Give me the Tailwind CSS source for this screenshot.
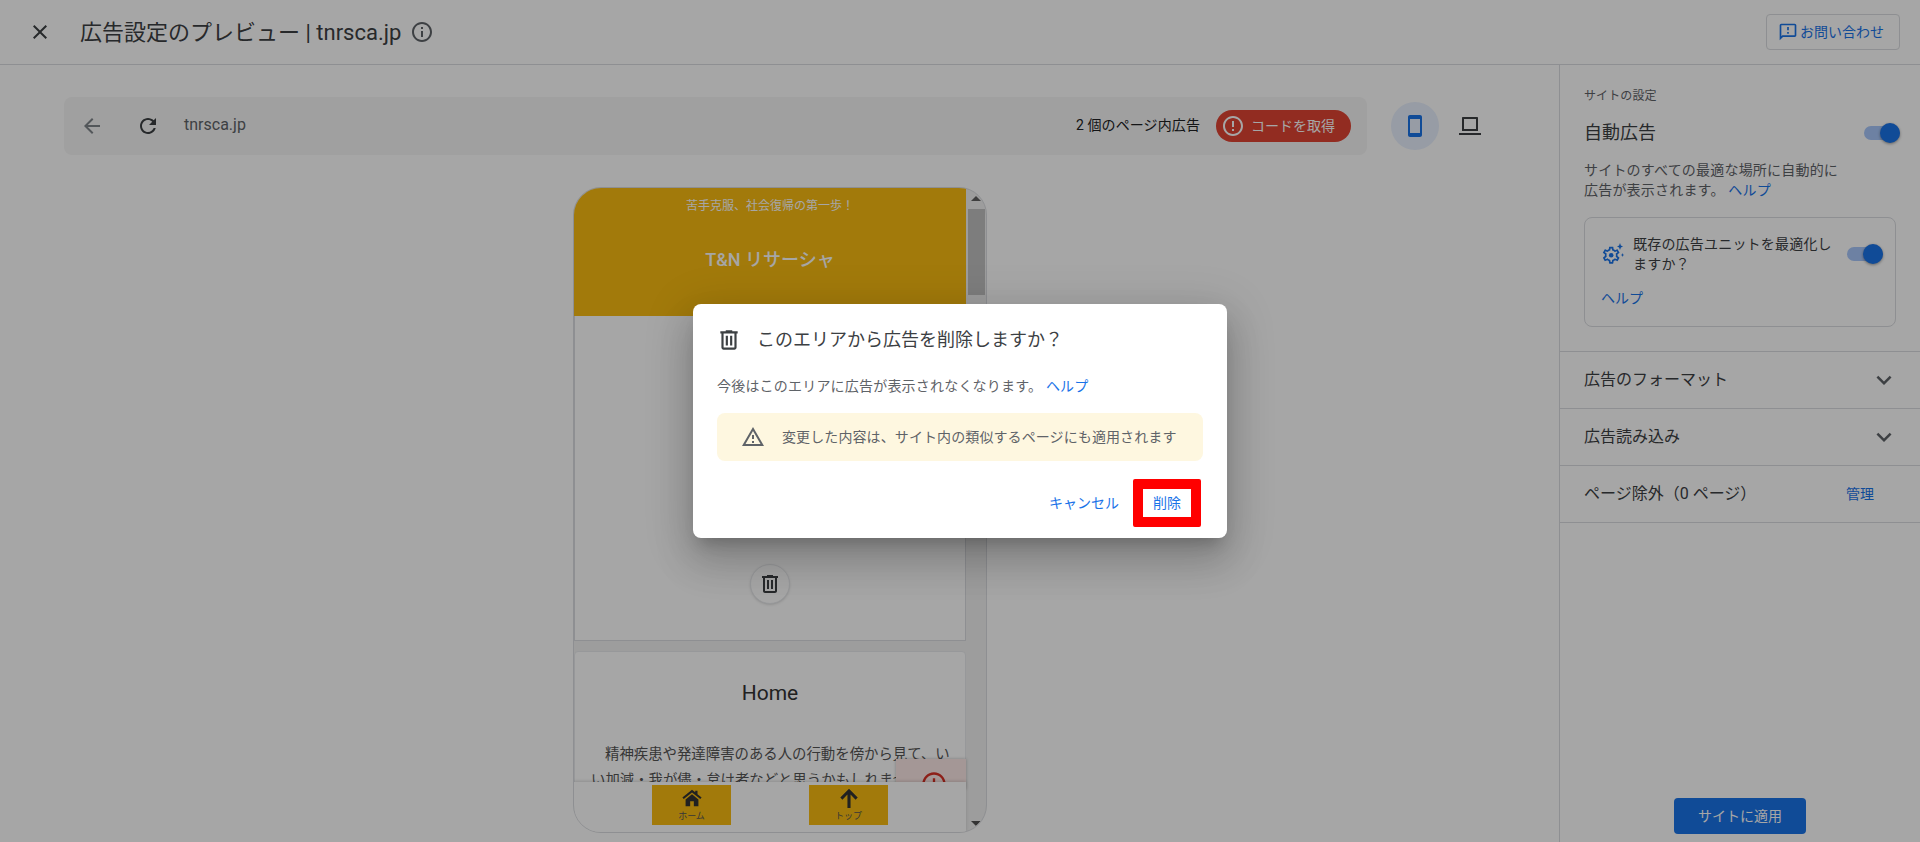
<!DOCTYPE html>
<html lang="ja">
<head>
    <meta charset="UTF-8">
    <title>広告設定のプレビュー</title>
    <script src="https://cdn.jsdelivr.net/npm/@tailwindcss/browser@4"></script>
</head>
<body class="relative h-[842px] overflow-hidden bg-white text-[#3c4043] [font-family:Roboto,'Noto_Sans_CJK_JP',sans-serif]">

    <!-- Top bar -->
    <header class="flex h-[65px] items-center border-b border-[#dadce0] pl-7 pr-5">
        <svg class="h-6 w-6 fill-[#3c4043]" viewBox="0 0 24 24"><path d="M19 6.41L17.59 5 12 10.59 6.41 5 5 6.41 10.59 12 5 17.59 6.41 19 12 13.41 17.59 19 19 17.59 13.41 12z"/></svg>
        <h1 class="ml-7 text-[22px] text-[#3c4043]">広告設定のプレビュー | tnrsca.jp</h1>
        <svg class="ml-[9px] h-6 w-6 fill-[#5f6368]" viewBox="0 0 24 24"><path d="M11 7h2v2h-2zm0 4h2v6h-2zm1-9C6.48 2 2 6.48 2 12s4.48 10 10 10 10-4.48 10-10S17.52 2 12 2zm0 18c-4.41 0-8-3.59-8-8s3.59-8 8-8 8 3.59 8 8-3.59 8-8 8z"/></svg>
        <button class="ml-auto flex h-9 w-[134px] items-center justify-center gap-[2px] rounded border border-[#dadce0] pr-1 text-sm text-[#1a73e8]">
            <svg class="h-5 w-5 fill-[#1a73e8]" viewBox="0 0 24 24"><path d="M20 2H4c-1.1 0-1.99.9-1.99 2L2 22l4-4h14c1.1 0 2-.9 2-2V4c0-1.1-.9-2-2-2zm0 14H5.17L4 17.17V4h16v12zM11 12h2v2h-2zm0-6h2v4h-2z"/></svg>
            お問い合わせ
        </button>
    </header>

    <div class="flex h-[777px]">
        <!-- Preview column -->
        <main class="w-[1559px]">
            <div class="flex items-center pl-16 pt-8">
                <div class="flex h-[58px] w-[1303px] items-center rounded-lg bg-[#f6f6f6] pl-4 pr-4">
                    <svg class="h-6 w-6 fill-[#80868b]" viewBox="0 0 24 24"><path d="M20 11H7.83l5.59-5.59L12 4l-8 8 8 8 1.41-1.41L7.83 13H20v-2z"/></svg>
                    <svg class="ml-8 h-6 w-6 fill-[#3c4043]" viewBox="0 0 24 24"><path d="M17.65 6.35C16.2 4.9 14.21 4 12 4c-4.42 0-7.99 3.58-7.99 8s3.57 8 7.99 8c3.73 0 6.84-2.55 7.73-6h-2.08c-.82 2.33-3.04 4-5.65 4-3.31 0-6-2.69-6-6s2.69-6 6-6c1.66 0 3.14.69 4.22 1.78L13 11h7V4l-2.35 2.35z"/></svg>
                    <span class="mb-[2px] ml-[24px] text-base text-[#5f6368]">tnrsca.jp</span>
                    <span class="mb-[2px] ml-auto text-[14px] tracking-[0.1px] text-[#202124]">2 個のページ内広告</span>
                    <button class="ml-4 flex h-8 w-[135px] items-center gap-[6px] rounded-full bg-[#e14434] pl-[5px] text-sm text-white">
                        <svg class="h-6 w-6 fill-white" viewBox="0 0 24 24"><path d="M11 15h2v2h-2zm0-8h2v6h-2zm.99-5C6.47 2 2 6.48 2 12s4.47 10 9.99 10C17.52 22 22 17.52 22 12S17.52 2 11.99 2zM12 20c-4.42 0-8-3.58-8-8s3.58-8 8-8 8 3.58 8 8-3.58 8-8 8z"/></svg>
                        コードを取得
                    </button>
                </div>
                <div class="ml-6 flex h-12 w-12 items-center justify-center rounded-full bg-[#e8f0fe]">
                    <svg class="h-6 w-6 fill-[#1a73e8]" viewBox="0 0 24 24"><path d="M17 1.01L7 1c-1.1 0-2 .9-2 2v18c0 1.1.9 2 2 2h10c1.1 0 2-.9 2-2V3c0-1.1-.9-1.99-2-1.99zM17 19H7V5h10v14z"/></svg>
                </div>
                <svg class="ml-[19px] h-6 w-6 fill-[#3c4043]" viewBox="0 0 24 24"><path fill-rule="evenodd" d="M5 3h14c.6 0 1 .4 1 1v13H4V4c0-.6.4-1 1-1zm1 2v10h12V5zM1 19h22v2H1z"/></svg>
            </div>

            <!-- Phone preview -->
            <div class="relative ml-[573px] mt-8 flex h-[646px] w-[414px] overflow-hidden rounded-[28px] border border-[#dadce0] bg-[#f1f1f1]">
                <div class="w-[392px] shrink-0">
                    <div class="flex h-[128px] flex-col items-center bg-[#f9bc12] text-white">
                        <p class="mt-[11px] text-xs leading-[14px]">苦手克服、社会復帰の第一歩！</p>
                        <p class="mt-[35px] text-lg font-medium leading-6">T&amp;N リサーシャ</p>
                    </div>
                    <div class="flex h-[325px] flex-col items-center border border-t-0 border-[#dadce0] bg-white pt-[248px]">
                        <div class="flex h-10 w-10 items-center justify-center rounded-full border border-[#e8eaed] bg-white shadow-sm">
                            <svg class="h-6 w-6 fill-[#3c4043]" viewBox="0 0 24 24"><path d="M15 4V3H9v1H4v2h1v13c0 1.1.9 2 2 2h10c1.1 0 2-.9 2-2V6h1V4h-5zm2 15H7V6h10v13zM9 8h2v9H9zm4 0h2v9h-2z"/></svg>
                        </div>
                    </div>
                    <div class="mt-[10px] h-[200px] overflow-hidden rounded-t border border-[#e8eaed] bg-white pl-4 pr-2">
                        <h2 class="mt-[25px] pr-2 text-center text-[21px] leading-8 text-[#333]">Home</h2>
                        <p class="mt-[33px] indent-[14px] text-[14.4px] leading-[26px] text-[#555]">精神疾患や発達障害のある人の行動を傍から見て、いい加減・我が儘・怠け者などと思うかもしれません</p>
                    </div>
                </div>
                <!-- Scrollbar -->
                <div class="flex w-[21px] flex-col items-center">
                    <div class="mt-[8px] h-0 w-0 border-x-[5px] border-b-[5px] border-x-transparent border-b-[#606060]"></div>
                    <div class="mt-[8px] h-[86px] w-[17px] bg-[#c1c1c1]"></div>
                    <div class="mt-[526px] h-0 w-0 border-x-[5px] border-t-[5px] border-x-transparent border-t-[#505050]"></div>
                </div>
                <!-- Floating ad marker and sticky bottom nav -->
                <div class="absolute left-[322px] top-[571px] flex h-[30px] w-[70px] justify-center overflow-hidden bg-[#fce8e6] pl-[6px] pt-[11px] shadow-[0_0_3px_rgba(0,0,0,0.25)]">
                    <svg class="h-7 w-7 shrink-0 fill-[#d93025]" viewBox="0 0 24 24"><path d="M11 15h2v2h-2zm0-8h2v6h-2zm.99-5C6.47 2 2 6.48 2 12s4.47 10 9.99 10C17.52 22 22 17.52 22 12S17.52 2 11.99 2zM12 20c-4.42 0-8-3.58-8-8s3.58-8 8-8 8 3.58 8 8-3.58 8-8 8z"/></svg>
                </div>
                <nav class="absolute bottom-0 left-0 flex h-[50px] w-[392px] justify-center gap-[78px] bg-white pt-[3px] shadow-[0_-1px_3px_rgba(0,0,0,0.15)]">
                    <div class="flex h-10 w-[79px] flex-col items-center bg-[#f9bc12] pt-[2px]">
                        <svg class="h-[22px] w-[22px] fill-[#333]" viewBox="0 0 24 24"><path d="M12 3L1.5 11.5 3 13l9-7 9 7 1.5-1.5L18 7.8V4h-2.5v1.8zM5 13.5V21h5v-5.5h4V21h5v-7.500L12 8z"/></svg>
                        <span class="mt-[1px] text-[9px] leading-3 text-[#555]">ホーム</span>
                    </div>
                    <div class="flex h-10 w-[79px] flex-col items-center bg-[#f9bc12] pt-[2px]">
                        <svg class="h-[22px] w-[22px] fill-[#333]" viewBox="0 0 24 24"><path d="M12 2l-9.500 9.500 2.300 2.300 5.500-5.500V23h3.400V8.300l5.500 5.500 2.300-2.300z"/></svg>
                        <span class="mt-[1px] text-[9px] leading-3 text-[#555]">トップ</span>
                    </div>
                </nav>
            </div>
        </main>

        <!-- Settings panel -->
        <aside class="flex w-[361px] flex-col border-l border-[#dadce0]">
            <div class="px-6 pt-[23px]">
                <p class="text-xs leading-4 tracking-[0.1px] text-[#5f6368]">サイトの設定</p>
                <div class="-mr-1 mt-[17px] flex items-center justify-between">
                    <h3 class="text-lg leading-6 text-[#3c4043]">自動広告</h3>
                    <span class="relative block h-[14px] w-[36px] rounded-full bg-[#a8c7fa]">
                        <span class="absolute -top-[3px] right-0 h-5 w-5 rounded-full bg-[#1a73e8] shadow-[0_1px_3px_rgba(0,0,0,0.4)]"></span>
                    </span>
                </div>
                <p class="mt-[15px] text-sm leading-5 tracking-[0.2px] text-[#5f6368]">サイトのすべての最適な場所に自動的に<br>広告が表示されます。 <span class="text-[#1a73e8]">ヘルプ</span></p>
                <div class="mt-[17px] h-[110px] w-[312px] rounded-lg border border-[#dadce0] pl-4 pt-4">
                    <div class="flex items-center">
                        <svg class="h-[24px] w-[24px] shrink-0 fill-[#1a73e8]" viewBox="0 0 24 24">
                            <path transform="translate(0 3) scale(.85)" d="M19.43 12.98c.04-.32.07-.64.07-.98 0-.34-.03-.66-.07-.98l2.11-1.65c.19-.15.24-.42.12-.64l-2-3.46c-.09-.16-.26-.25-.44-.25-.06 0-.12.01-.17.03l-2.49 1c-.52-.4-1.08-.73-1.69-.98l-.38-2.65C14.46 2.18 14.25 2 14 2h-4c-.25 0-.46.18-.49.42l-.38 2.65c-.61.25-1.17.59-1.69.98l-2.49-1c-.06-.02-.12-.03-.18-.03-.17 0-.34.09-.43.25l-2 3.46c-.13.22-.07.49.12.64l2.11 1.65c-.04.32-.07.65-.07.98 0 .33.03.66.07.98l-2.11 1.65c-.19.15-.24.42-.12.64l2 3.46c.09.16.26.25.44.25.06 0 .12-.01.17-.03l2.49-1c.52.4 1.08.73 1.69.98l.38 2.65c.03.24.24.42.49.42h4c.25 0 .46-.18.49-.42l.38-2.65c.61-.25 1.17-.59 1.69-.98l2.49 1c.06.02.12.03.18.03.17 0 .34-.09.43-.25l2-3.46c.12-.22.07-.49-.12-.64l-2.11-1.65zm-1.98-1.71c.04.31.05.52.05.73 0 .21-.02.43-.05.73l-.14 1.13.89.7 1.08.84-.7 1.21-1.27-.51-1.04-.42-.9.68c-.43.32-.84.56-1.25.73l-1.06.43-.16 1.13-.2 1.35h-1.4l-.19-1.35-.16-1.13-1.06-.43c-.43-.18-.83-.41-1.23-.71l-.91-.7-1.06.43-1.27.51-.7-1.21 1.08-.84.89-.7-.14-1.13c-.03-.31-.05-.54-.05-.74s.02-.43.05-.73l.14-1.13-.89-.7-1.08-.84.7-1.21 1.27.51 1.04.42.9-.68c.43-.32.84-.56 1.25-.73l1.06-.43.16-1.13.2-1.35h1.39l.19 1.35.16 1.13 1.06.43c.43.18.83.41 1.23.71l.91.7 1.06-.43 1.27-.51.7 1.21-1.07.85-.89.7.14 1.13z"/>
                            <circle cx="10.200" cy="13.200" r="2.300"/>
                            <path d="M19 1l.9 2.600 2.100.9-2.100.9-.9 2.600-.9-2.600-2.100-.9 2.100-.9zM21.500 11l.5 1.500 1.200.5-1.200.5-.5 1.500-.5-1.500-1.200-.5 1.200-.5z"/>
                        </svg>
                        <p class="ml-[8px] w-[204px] text-sm leading-5 tracking-[0.2px] text-[#3c4043]">既存の広告ユニットを最適化しますか？</p>
                        <span class="relative ml-[10px] block h-[14px] w-[36px] shrink-0 rounded-full bg-[#a8c7fa]">
                            <span class="absolute -top-[3px] right-0 h-5 w-5 rounded-full bg-[#1a73e8] shadow-[0_1px_3px_rgba(0,0,0,0.4)]"></span>
                        </span>
                    </div>
                    <p class="mt-[14px] text-sm leading-5 text-[#1a73e8]">ヘルプ</p>
                </div>
            </div>
            <div class="mt-6 flex h-[58px] items-center justify-between border-y border-[#dadce0] pl-6 pr-[21px]">
                <span class="text-base text-[#3c4043]">広告のフォーマット</span>
                <svg class="h-[30px] w-[30px] fill-[#5f6368]" viewBox="0 0 24 24"><path d="M16.59 8.59L12 13.17 7.41 8.59 6 10l6 6 6-6z"/></svg>
            </div>
            <div class="flex h-[57px] items-center justify-between border-b border-[#dadce0] pl-6 pr-[21px]">
                <span class="text-base text-[#3c4043]">広告読み込み</span>
                <svg class="h-[30px] w-[30px] fill-[#5f6368]" viewBox="0 0 24 24"><path d="M16.59 8.59L12 13.17 7.41 8.59 6 10l6 6 6-6z"/></svg>
            </div>
            <div class="flex h-[57px] items-center justify-between border-b border-[#dadce0] pl-6 pr-[46px]">
                <span class="text-base text-[#3c4043]">ページ除外（0 ページ）</span>
                <span class="text-sm text-[#1a73e8]">管理</span>
            </div>
            <div class="flex flex-1 items-end justify-center pb-2">
                <button class="h-9 w-[132px] rounded bg-[#1a73e8] text-sm text-white">サイトに適用</button>
            </div>
        </aside>
    </div>

    <!-- Scrim -->
    <div class="absolute inset-0 bg-black/35"></div>

    <!-- Dialog -->
    <div class="absolute left-[693px] top-[304px] h-[234px] w-[534px] rounded-lg bg-white px-6 pt-5 shadow-[0_11px_15px_-7px_rgba(0,0,0,0.2),0_24px_38px_3px_rgba(0,0,0,0.14),0_9px_46px_8px_rgba(0,0,0,0.12)]">
        <div class="flex items-center">
            <svg class="-ml-px h-[26px] w-[26px] fill-[#3c4043]" viewBox="0 0 24 24"><path d="M15 4V3H9v1H4v2h1v13c0 1.1.9 2 2 2h10c1.1 0 2-.9 2-2V6h1V4h-5zm2 15H7V6h10v13zM9 8h2v9H9zm4 0h2v9h-2z"/></svg>
            <h2 class="ml-[15px] text-lg leading-8 text-[#3c4043]">このエリアから広告を削除しますか？</h2>
        </div>
        <p class="mt-[20px] text-sm leading-5 tracking-[0.2px] text-[#5f6368]">今後はこのエリアに広告が表示されなくなります。 <span class="text-[#1a73e8]">ヘルプ</span></p>
        <div class="mt-[17px] flex h-12 w-[486px] items-center rounded-lg bg-[#fef7e0] pl-6">
            <svg class="h-6 w-6 fill-[#5f6368]" viewBox="0 0 24 24"><path d="M12 5.990L19.530 19H4.470L12 5.990M12 2L1 21h22L12 2zm1 14h-2v2h2v-2zm0-6h-2v4h2v-4z"/></svg>
            <p class="ml-[17px] text-sm leading-5 tracking-[0.1px] text-[#5f6368]">変更した内容は、サイト内の類似するページにも適用されます</p>
        </div>
        <div class="mt-[18px] flex items-center justify-end pr-[2px]">
            <span class="text-sm text-[#1a73e8]">キャンセル</span>
            <button class="ml-[14px] h-12 w-[68px] rounded-[2px] border-[10px] border-[#ff0000] text-sm text-[#1a73e8]">削除</button>
        </div>
    </div>
</body>
</html>
